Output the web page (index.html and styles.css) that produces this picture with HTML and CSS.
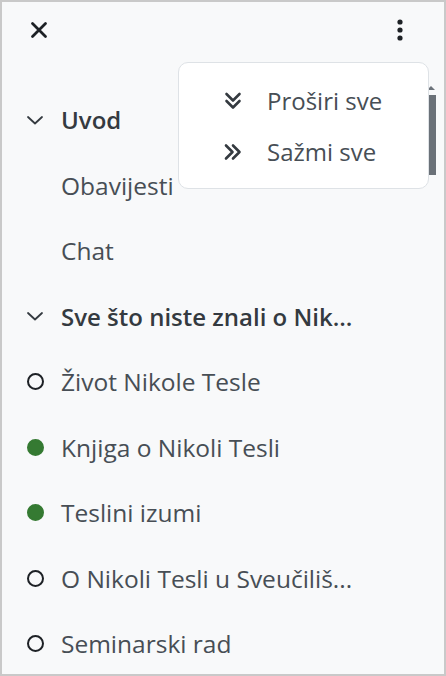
FILE: index.html
```html
<!DOCTYPE html>
<html lang="hr">
<head>
<meta charset="utf-8">
<title>Indeks kolegija</title>
<link rel="stylesheet" href="styles.css">
</head>
<body>
<div class="drawer">
  <div class="header">
    <button class="icon-btn" aria-label="Zatvori">
      <svg width="18" height="18" viewBox="0 0 18 18"><path d="M2.5 2.5 L15.5 15.5 M15.5 2.5 L2.5 15.5" stroke="#1d2125" stroke-width="2.8" stroke-linecap="round" fill="none"/></svg>
    </button>
    <button class="icon-btn" aria-label="Više">
      <svg width="8" height="24" viewBox="0 0 8 24"><circle cx="4" cy="4" r="2.6" fill="#1d2125"/><circle cx="4" cy="12" r="2.6" fill="#1d2125"/><circle cx="4" cy="20" r="2.6" fill="#1d2125"/></svg>
    </button>
  </div>

  <ul class="index">
    <li class="row section">
      <svg class="chev" width="18" height="10" viewBox="0 0 18 10"><path d="M3 2 L10 8.5 L17 2" stroke="#343a40" stroke-width="1.8" fill="none" stroke-linecap="round" stroke-linejoin="round"/></svg>
      <span class="label">Uvod</span>
    </li>
    <li class="row"><span class="mark"></span><span class="label">Obavijesti</span></li>
    <li class="row"><span class="mark"></span><span class="label">Chat</span></li>
    <li class="row section">
      <svg class="chev" width="18" height="10" viewBox="0 0 18 10"><path d="M3 2 L10 8.5 L17 2" stroke="#343a40" stroke-width="1.8" fill="none" stroke-linecap="round" stroke-linejoin="round"/></svg>
      <span class="label">Sve što niste znali o Nik...</span>
    </li>
    <li class="row"><span class="mark dot"></span><span class="label">Život Nikole Tesle</span></li>
    <li class="row"><span class="mark dot done"></span><span class="label">Knjiga o Nikoli Tesli</span></li>
    <li class="row"><span class="mark dot done"></span><span class="label">Teslini izumi</span></li>
    <li class="row"><span class="mark dot"></span><span class="label">O Nikoli Tesli u Sveučiliš...</span></li>
    <li class="row"><span class="mark dot"></span><span class="label">Seminarski rad</span></li>
  </ul>

  <div class="scrollbar"><span class="arrow"></span><span class="thumb"></span></div>

  <div class="menu">
    <div class="menu-item">
      <svg class="menu-icon" width="20" height="20" viewBox="0 0 20 20"><path d="M3.5 3 L10 9.5 L16.5 3 M3.5 10 L10 16.5 L16.5 10" stroke="#343a40" stroke-width="2.6" fill="none" stroke-linecap="round" stroke-linejoin="round"/></svg>
      <span>Proširi sve</span>
    </div>
    <div class="menu-item">
      <svg class="menu-icon" width="20" height="20" viewBox="0 0 20 20"><path d="M3 3.5 L9.5 10 L3 16.5 M10 3.5 L16.5 10 L10 16.5" stroke="#343a40" stroke-width="2.6" fill="none" stroke-linecap="round" stroke-linejoin="round"/></svg>
      <span>Sažmi sve</span>
    </div>
  </div>
</div>
</body>
</html>
```

FILE: styles.css
```css
* { box-sizing: border-box; }
html, body { margin: 0; padding: 0; }
body {
  font-family: "Open Sans", "Noto Sans", sans-serif;
  background: #ffffff;
}
.drawer {
  position: relative;
  width: 446px;
  height: 676px;
  border: 2px solid #c9c9c9;
  background: #f8f9fa;
  overflow: hidden;
}
.header {
  display: flex;
  justify-content: space-between;
  align-items: center;
  height: 56px;
  padding: 0 34px 0 27px;
}
.icon-btn {
  display: flex;
  align-items: center;
  justify-content: center;
  width: 20px;
  height: 28px;
  padding: 0;
  border: 0;
  background: none;
}
.index {
  list-style: none;
  margin: 29px 0 0;
  padding: 0 0 0 23px;
}
.row {
  display: flex;
  align-items: center;
  height: 65.5px;
  font-size: 24.5px;
  color: #474e55;
}
.row .label { white-space: nowrap; }
.section { font-weight: 600; font-size: 24px; color: #343a40; }
.chev { flex: none; width: 18px; margin: 0 18px 0 0; }
.mark {
  flex: none;
  width: 17px;
  height: 17px;
  margin: 0 17px 0 2px;
}
.mark.dot {
  border: 2px solid #1d2125;
  border-radius: 50%;
}
.mark.dot.done {
  border-color: #357a32;
  background: #357a32;
}
.mark:not(.dot) { visibility: hidden; }

.scrollbar {
  position: absolute;
  top: 84px;
  left: 424px;
  width: 10px;
  display: flex;
  flex-direction: column;
  align-items: center;
}
.arrow {
  width: 0; height: 0;
  border-left: 4px solid transparent;
  border-right: 4px solid transparent;
  border-bottom: 4px solid #6c737a;
  margin-bottom: 5px;
}
.thumb {
  width: 10px;
  height: 80px;
  background: #6a7178;
}

.menu {
  position: absolute;
  top: 60px;
  left: 176px;
  width: 251px;
  height: 127px;
  background: #ffffff;
  border: 1px solid #dee2e6;
  border-radius: 10px;
  padding: 12px 0 0 44px;
}
.menu-item {
  display: flex;
  align-items: center;
  height: 51px;
  font-size: 24px;
  color: #474e55;
}
.menu-icon { margin-right: 24px; }
```
